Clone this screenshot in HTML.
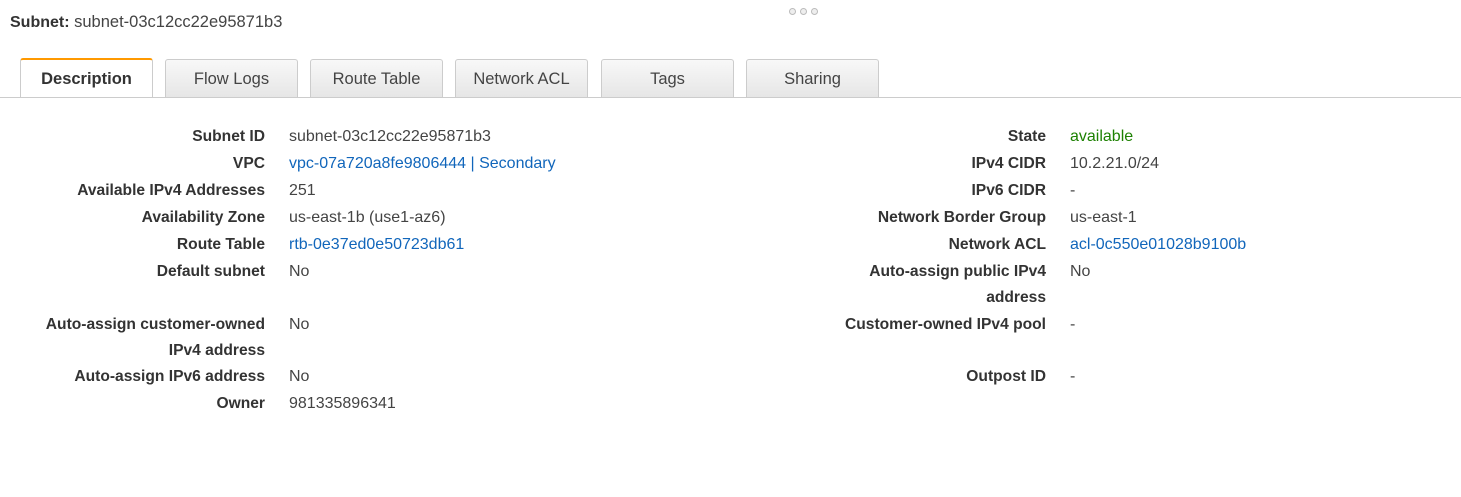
<!DOCTYPE html>
<html><head><style>
body{margin:0;background:#fff;font-family:"Liberation Sans",sans-serif;color:#444;font-size:16px;width:1461px;height:497px;overflow:hidden;position:relative}
.hdr{position:absolute;left:10px;top:13px;font-size:16.5px}
.hdr b{color:#333;font-size:16px}
.dots{position:absolute;left:789px;top:2px}
.dots span{display:inline-block;width:5px;height:5px;border-radius:50%;border:1px solid #bbb;background:#eee;margin-right:4px}
.line{position:absolute;left:0;top:97px;width:1461px;height:1px;background:#ccc}
.tab{position:absolute;top:59px;height:37px;width:131px;border:1px solid #ccc;border-bottom:none;border-radius:3px 3px 0 0;background:linear-gradient(#f8f8f8,#e6e6e6);text-align:center;line-height:38px;font-size:16.5px;color:#444;box-sizing:content-box}
.tab.act{background:#fff;border-top:2px solid #f90;height:37px;top:58px;font-weight:bold;z-index:2;color:#333;font-size:16.5px}
.r{position:absolute;display:flex;align-items:baseline;line-height:26px;white-space:nowrap;margin-top:2px}
.l{font-weight:bold;text-align:right;width:400px;color:#333;font-size:15.6px;margin-right:24px}
.a{color:#1166bb}.g{color:#1d8102}
</style></head><body>
<div class="hdr"><b>Subnet:</b> subnet-03c12cc22e95871b3</div>
<div class="dots"><span></span><span></span><span></span></div>
<div class="line"></div>
<div class="tab act" style="left:20px">Description</div>
<div class="tab" style="left:165px">Flow Logs</div>
<div class="tab" style="left:310px">Route Table</div>
<div class="tab" style="left:455px">Network ACL</div>
<div class="tab" style="left:601px">Tags</div>
<div class="tab" style="left:746px">Sharing</div>

<div class="r" style="left:-135px;top:122px"><div class="l">Subnet ID</div><div>subnet-03c12cc22e95871b3</div></div>
<div class="r" style="left:-135px;top:149px"><div class="l">VPC</div><div class="a">vpc-07a720a8fe9806444 | Secondary</div></div>
<div class="r" style="left:-135px;top:176px"><div class="l">Available IPv4 Addresses</div><div>251</div></div>
<div class="r" style="left:-135px;top:203px"><div class="l">Availability Zone</div><div>us-east-1b (use1-az6)</div></div>
<div class="r" style="left:-135px;top:230px"><div class="l">Route Table</div><div class="a">rtb-0e37ed0e50723db61</div></div>
<div class="r" style="left:-135px;top:257px"><div class="l">Default subnet</div><div>No</div></div>
<div class="r" style="left:-135px;top:310px"><div class="l">Auto-assign customer-owned<br>IPv4 address</div><div>No</div></div>
<div class="r" style="left:-135px;top:362px"><div class="l">Auto-assign IPv6 address</div><div>No</div></div>
<div class="r" style="left:-135px;top:389px"><div class="l">Owner</div><div>981335896341</div></div>

<div class="r" style="left:646px;top:122px"><div class="l">State</div><div class="g">available</div></div>
<div class="r" style="left:646px;top:149px"><div class="l">IPv4 CIDR</div><div>10.2.21.0/24</div></div>
<div class="r" style="left:646px;top:176px"><div class="l">IPv6 CIDR</div><div>-</div></div>
<div class="r" style="left:646px;top:203px"><div class="l">Network Border Group</div><div>us-east-1</div></div>
<div class="r" style="left:646px;top:230px"><div class="l">Network ACL</div><div class="a">acl-0c550e01028b9100b</div></div>
<div class="r" style="left:646px;top:257px"><div class="l">Auto-assign public IPv4<br>address</div><div>No</div></div>
<div class="r" style="left:646px;top:310px"><div class="l">Customer-owned IPv4 pool</div><div>-</div></div>
<div class="r" style="left:646px;top:362px"><div class="l">Outpost ID</div><div>-</div></div>
</body></html>
